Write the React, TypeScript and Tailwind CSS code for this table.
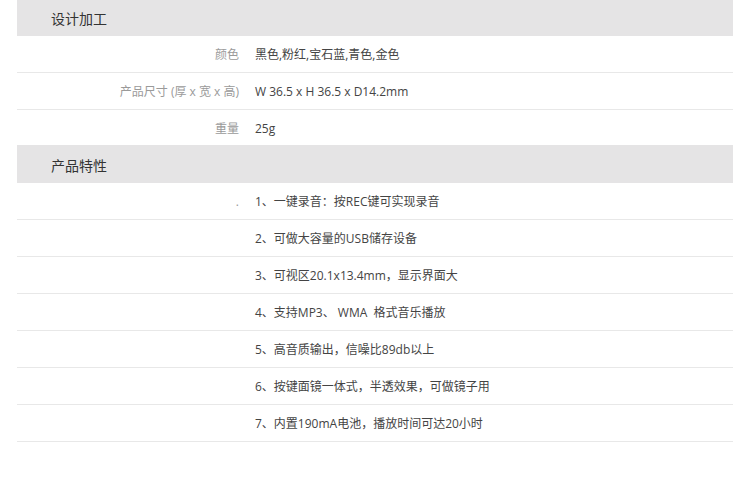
import React from 'react';

// 规格表：分组标题 + 行
const specs = [
    { label: '颜色', value: '黑色,粉红,宝石蓝,青色,金色' },
    { label: '产品尺寸 (厚 x 宽 x 高)', value: 'W 36.5 x H 36.5 x D14.2mm' },
    { label: '重量', value: '25g' },
];

const features = [
    '1、一键录音：按REC键可实现录音',
    '2、可做大容量的USB储存设备',
    '3、可视区20.1x13.4mm，显示界面大',
    '4、支持MP3、 WMA  格式音乐播放',
    '5、高音质输出，信噪比89db以上',
    '6、按键面镜一体式，半透效果，可做镜子用',
    '7、内置190mA电池，播放时间可达20小时',
];

const font = { fontFamily: '"Open Sans", "Noto Sans CJK SC", sans-serif' };

const Row: React.FC<{ label?: string; value: string; last?: boolean }> = ({ label, value, last }) => (
    <div className={last ? 'flex items-center h-[35px] pt-[2px]' : 'flex items-center h-[37px] pt-[2px] border-b border-[#e8e8e8]'}>
        <div className="w-[222px] text-right text-[12px] text-[#9a9a9a] whitespace-pre">{label}</div>
        <div className="pl-[16px] text-[12px] text-[#444] whitespace-pre">{value}</div>
    </div>
);

const App: React.FC = () => {
    return (
        <div className="w-[750px] h-[485px] bg-white" style={font}>
            <div className="ml-[17px] w-[716px]">
                {/* 设计加工 */}
                <div className="h-[36px] pt-[1px] bg-[#e5e4e5] flex items-center pl-[34px] text-[14px] text-[#333]">设计加工</div>
                {specs.map((s, i) => (
                    <Row key={s.label} label={s.label} value={s.value} last={i === specs.length - 1} />
                ))}

                {/* 产品特性 */}
                <div className="h-[38px] pt-[3px] bg-[#e5e4e5] flex items-center pl-[34px] text-[14px] text-[#333]">产品特性</div>
                {features.map((f, i) => (
                    <Row key={i} label={i === 0 ? '.' : ''} value={f} />
                ))}
            </div>
        </div>
    );
};

export default App;
